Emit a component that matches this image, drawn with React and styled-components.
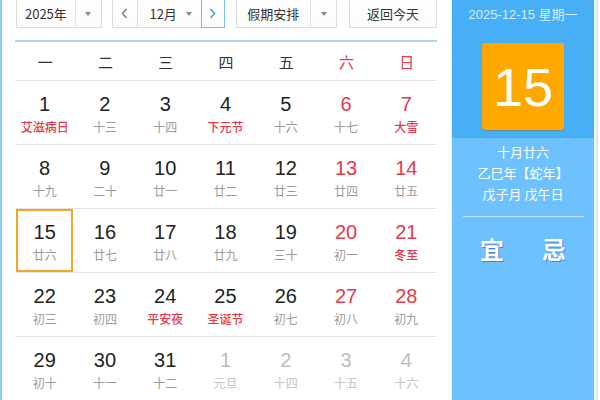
import React from "react";
import styled, { createGlobalStyle, css } from "styled-components";

const GlobalStyle = createGlobalStyle`
  html, body { margin: 0; padding: 0; background: #fff; }
  body { font-family: "Liberation Sans", "Noto Sans CJK SC", sans-serif; }
`;

const Widget = styled.div`
  display: flex;
  width: 598px;
  height: 400px;
  overflow: hidden;
  box-sizing: border-box;
  border-left: 2px solid #8ccbf1;
  border-right: 2px solid #d3e9fb;
`;

const Main = styled.div`
  width: 450px;
  box-sizing: border-box;
  padding: 0 14px 0 13px;
  border-right: 1px solid #e6f3fd;
  display: flex;
  flex-direction: column;
`;

const Toolbar = styled.div`
  display: flex;
  align-items: stretch;
  height: 28px;
  padding-left: 1px;
`;

const Box = styled.div`
  display: flex;
  align-items: center;
  box-sizing: border-box;
  width: ${(p) => p.$w}px;
  margin-left: ${(p) => p.$ml || 0}px;
  border: 1px solid ${(p) => (p.$active ? "#78bdea" : "#dcdcdc")};
  border-top: none;
  background: linear-gradient(#ffffff, #fbfbfb);
  color: #333;
  font-family: "Noto Sans CJK SC", sans-serif;
  font-size: 13px;
`;

const BoxLabel = styled.span`
  flex: 1;
  text-align: center;
`;

const ArrowPart = styled.span`
  display: flex;
  align-items: center;
  justify-content: center;
  width: ${(p) => p.$w || 25}px;
  align-self: stretch;
  border-left: ${(p) => (p.$divider ? "1px solid #e4e4e4" : "none")};
`;

const Caret = styled.span`
  width: 0;
  height: 0;
  border-left: 3.5px solid transparent;
  border-right: 3.5px solid transparent;
  border-top: 4px solid #888;
`;

const NavButton = styled(Box)`
  justify-content: center;
  border-right: ${(p) => (p.$noRight ? "none" : undefined)};
  color: ${(p) => (p.$active ? "#3a9ae2" : "#777")};
`;

const MonthBox = styled(Box)`
  justify-content: center;
  gap: 9px;
  border-right: none;
  padding-left: 3px;
`;

const Separator = styled.div`
  height: 2px;
  margin-top: 12px;
  background: #aad9f5;
`;

const WeekHeader = styled.div`
  display: grid;
  grid-template-columns: repeat(7, 1fr);
  height: 38px;
  align-items: center;
`;

const WeekDay = styled.div`
  text-align: center;
  font-family: "Noto Sans CJK SC", sans-serif;
  font-size: 15px;
  color: ${(p) => (p.$weekend ? "#e23a4c" : "#333")};
`;

const Row = styled.div`
  display: grid;
  grid-template-columns: repeat(7, 1fr);
  border-top: 1px solid #e2e2e2;
  height: 64px;
  box-sizing: border-box;
`;

const Cell = styled.div`
  display: flex;
  flex-direction: column;
  align-items: center;
  box-sizing: border-box;
  margin: 0 2px 0 1px;
  padding-top: 10px;
  border: 2px solid transparent;
  ${(p) =>
    p.$selected &&
    css`
      border-color: #f2a52b;
    `}
`;

const DayNum = styled.div`
  font-family: "Liberation Sans", Arial, sans-serif;
  font-size: 20px;
  line-height: 22px;
  color: ${(p) => (p.$other ? "#bdbdbd" : p.$weekend ? "#e23a4c" : "#222")};
`;

const Lunar = styled.div`
  margin-top: 4px;
  font-family: "Noto Sans CJK SC", sans-serif;
  font-size: 12px;
  line-height: 16px;
  font-weight: ${(p) => (p.$festival ? 500 : 400)};
  color: ${(p) => (p.$other ? "#c4c4c4" : p.$festival ? "#e23a4c" : "#9a9a9a")};
`;

const Side = styled.div`
  width: 142px;
  display: flex;
  flex-direction: column;
  background: #6dc1fd;
`;

const SideTop = styled.div`
  height: 138px;
  background: #47aff6;
  display: flex;
  flex-direction: column;
  align-items: center;
`;

const DateLine = styled.div`
  margin-top: 6px;
  line-height: 18px;
  font-family: "Liberation Sans", "Noto Sans CJK SC", sans-serif;
  font-size: 13px;
  color: #d8edff;
`;

const BigDay = styled.div`
  margin-top: 19px;
  width: 82px;
  height: 87px;
  border-radius: 3px;
  background: #ffa900;
  box-shadow: 0 1px 1px rgba(150, 90, 0, 0.35);
  display: flex;
  align-items: center;
  justify-content: center;
  color: #fff;
  font-family: "Liberation Sans", Arial, sans-serif;
  font-size: 54px;
`;

const InfoLines = styled.div`
  padding-top: 3px;
  display: flex;
  flex-direction: column;
  align-items: center;
`;

const InfoLine = styled.div`
  line-height: 21px;
  font-family: "Noto Sans CJK SC", sans-serif;
  font-size: 13px;
  color: #fff;
`;

const Rule = styled.div`
  height: 1px;
  margin: 12px 10px 0 11px;
  background: rgba(255, 255, 255, 0.55);
`;

const YiJi = styled.div`
  display: flex;
  justify-content: center;
  gap: 38px;
  margin-top: 17px;
`;

const YiJiChar = styled.div`
  font-family: "Noto Sans CJK SC", sans-serif;
  font-size: 24px;
  line-height: 30px;
  font-weight: 700;
  color: #fff;
  text-shadow: 1px 1px 0 #4d7fd8;
`;

const Chevron = ({ dir, color }) => (
  <svg width="7" height="11" viewBox="0 0 7 11">
    <polyline
      points={dir === "left" ? "5.5,1 1.5,5.5 5.5,10" : "1.5,1 5.5,5.5 1.5,10"}
      fill="none"
      stroke={color}
      strokeWidth="1.4"
    />
  </svg>
);

const weeks = [
  [
    [1, "艾滋病日", "f"], [2, "十三"], [3, "十四"], [4, "下元节", "f"], [5, "十六"], [6, "十七"], [7, "大雪", "f"],
  ],
  [
    [8, "十九"], [9, "二十"], [10, "廿一"], [11, "廿二"], [12, "廿三"], [13, "廿四"], [14, "廿五"],
  ],
  [
    [15, "廿六", "s"], [16, "廿七"], [17, "廿八"], [18, "廿九"], [19, "三十"], [20, "初一"], [21, "冬至", "f"],
  ],
  [
    [22, "初三"], [23, "初四"], [24, "平安夜", "f"], [25, "圣诞节", "f"], [26, "初七"], [27, "初八"], [28, "初九"],
  ],
  [
    [29, "初十"], [30, "十一"], [31, "十二"], [1, "元旦", "o"], [2, "十四", "o"], [3, "十五", "o"], [4, "十六", "o"],
  ],
];

const weekdays = ["一", "二", "三", "四", "五", "六", "日"];

export default function App() {
  return (
    <>
      <GlobalStyle />
      <Widget>
        <Main>
          <Toolbar>
            <Box $w={86}>
              <BoxLabel>2025年</BoxLabel>
              <ArrowPart $divider $w={25}>
                <Caret />
              </ArrowPart>
            </Box>
            <NavButton $w={25} $ml={10} $noRight>
              <Chevron dir="left" color="#777" />
            </NavButton>
            <MonthBox $w={64}>
              <span>12月</span>
              <Caret />
            </MonthBox>
            <NavButton $w={24} $active>
              <Chevron dir="right" color="#3a9ae2" />
            </NavButton>
            <Box $w={102} $ml={11}>
              <BoxLabel>假期安排</BoxLabel>
              <ArrowPart $divider $w={25}>
                <Caret />
              </ArrowPart>
            </Box>
            <Box $w={88} $ml={12}>
              <BoxLabel>返回今天</BoxLabel>
            </Box>
          </Toolbar>
          <Separator />
          <WeekHeader>
            {weekdays.map((d, i) => (
              <WeekDay key={d} $weekend={i >= 5}>
                {d}
              </WeekDay>
            ))}
          </WeekHeader>
          {weeks.map((week, wi) => (
            <Row key={wi}>
              {week.map(([n, l, flag], di) => {
                const other = flag === "o";
                return (
                  <Cell key={di} $selected={flag === "s"}>
                    <DayNum $other={other} $weekend={di >= 5}>
                      {n}
                    </DayNum>
                    <Lunar $other={other} $festival={flag === "f"}>
                      {l}
                    </Lunar>
                  </Cell>
                );
              })}
            </Row>
          ))}
        </Main>
        <Side>
          <SideTop>
            <DateLine>2025-12-15 星期一</DateLine>
            <BigDay>15</BigDay>
          </SideTop>
          <InfoLines>
            <InfoLine>十月廿六</InfoLine>
            <InfoLine>乙巳年【蛇年】</InfoLine>
            <InfoLine>戊子月 戊午日</InfoLine>
          </InfoLines>
          <Rule />
          <YiJi>
            <YiJiChar>宜</YiJiChar>
            <YiJiChar>忌</YiJiChar>
          </YiJi>
        </Side>
      </Widget>
    </>
  );
}
